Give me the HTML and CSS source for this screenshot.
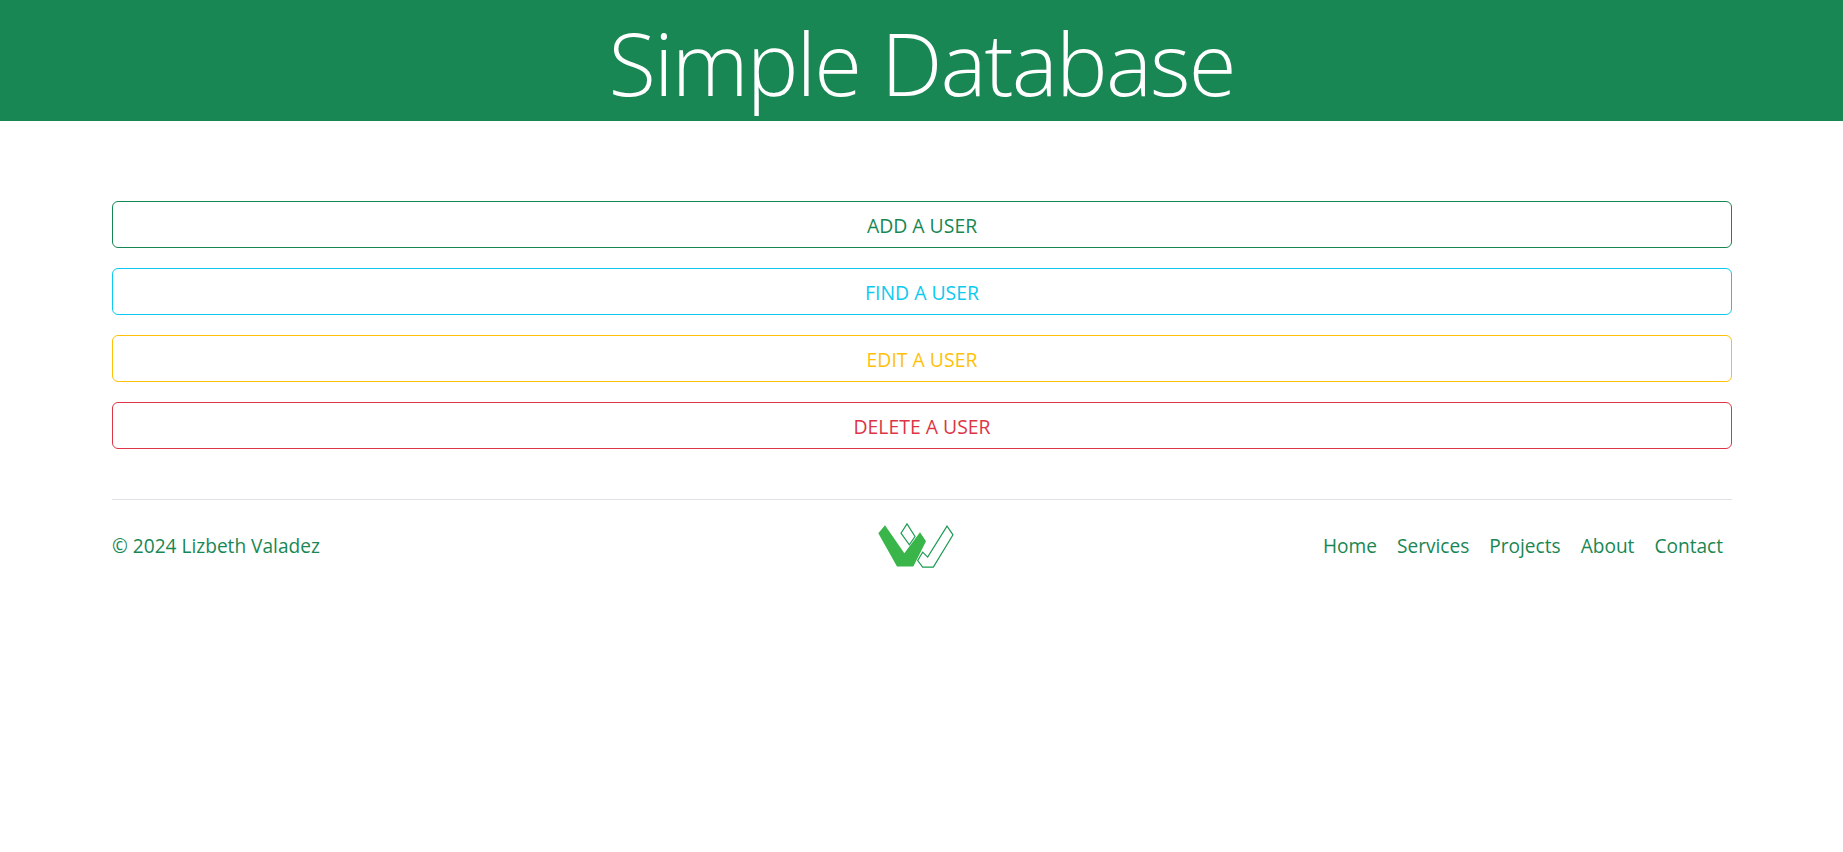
FILE: index.html
```html
<!DOCTYPE html>
<html lang="en">
<head>
<meta charset="utf-8">
<title>Simple Database</title>
<link rel="stylesheet" href="styles.css">
</head>
<body>
<header class="banner"><h1 class="banner-title">Simple Database</h1></header>
<main class="container">
  <div class="actions">
    <a class="btn btn-green" href="#">ADD A USER</a>
    <a class="btn btn-cyan" href="#">FIND A USER</a>
    <a class="btn btn-yellow" href="#">EDIT A USER</a>
    <a class="btn btn-red" href="#">DELETE A USER</a>
  </div>
  <footer class="footer">
    <p class="copy">© 2024 Lizbeth Valadez</p>
    <a class="logo" href="#" aria-label="Logo">
      <svg class="logo-mark" viewBox="50 35 240 140">
        <path class="logo-solid" d="M57 68 L77 44 L135 128 L182 65 L200 92 L162 168 L113 168 Z"/>
        <path class="logo-line" d="M143 40 L167 78 L150 103 L125 68 Z"/>
        <path class="logo-line" d="M175 150 L190 125 L205 140 L263 47 L281 73 L222 170 L190 170 Z"/>
      </svg>
    </a>
    <nav class="links">
      <a href="#">Home</a>
      <a href="#">Services</a>
      <a href="#">Projects</a>
      <a href="#">About</a>
      <a href="#">Contact</a>
    </nav>
  </footer>
</main>
</body>
</html>
```
FILE: styles.css
```css
* { box-sizing: border-box; }
body {
  margin: 0;
  background: #fff;
  color: #198754;
  font-family: "Open Sans", "Noto Sans", sans-serif;
  font-size: 19.1px;
}
.banner {
  height: 121px;
  padding-top: 4px;
  background: #198754;
  display: flex;
  justify-content: center;
  align-items: center;
  overflow: hidden;
}
.banner-title {
  margin: 0;
  color: #fff;
  font-size: 87px;
  font-weight: 300;
  line-height: 1.2;
  letter-spacing: -1.9px;
}
.container {
  margin: 0 111px 0 112px;
  padding-top: 80px;
}
.actions {
  display: flex;
  flex-direction: column;
  gap: 20px;
}
.btn {
  display: block;
  height: 47px;
  line-height: 47px;
  border: 1px solid;
  border-radius: 6px;
  text-align: center;
  text-decoration: none;
  font-size: 19.4px;
}
.btn-green { color: #198754; border-color: #198754; }
.btn-cyan { color: #0dcaf0; border-color: #0dcaf0; }
.btn-yellow { color: #ffc107; border-color: #ffc107; }
.btn-red { color: #dc3545; border-color: #dc3545; }
.footer {
  margin-top: 50px;
  border-top: 1px solid #dee2e6;
  height: 92px;
  display: grid;
  grid-template-columns: 1fr 1fr 1fr;
  align-items: center;
}
.copy { margin: 0; }
.logo {
  justify-self: center;
  display: block;
  height: 47px;
  margin: 0 0 0 -12px;
}
.logo-mark { display: block; width: 80px; height: 47px; }
.logo-solid { fill: #39b54a; }
.logo-line { fill: none; stroke: #1a9a50; stroke-width: 3.5; }
.links {
  display: flex;
  justify-content: flex-end;
  gap: 20px;
  padding-right: 9px;
}
.links a { color: #198754; text-decoration: none; }
```
